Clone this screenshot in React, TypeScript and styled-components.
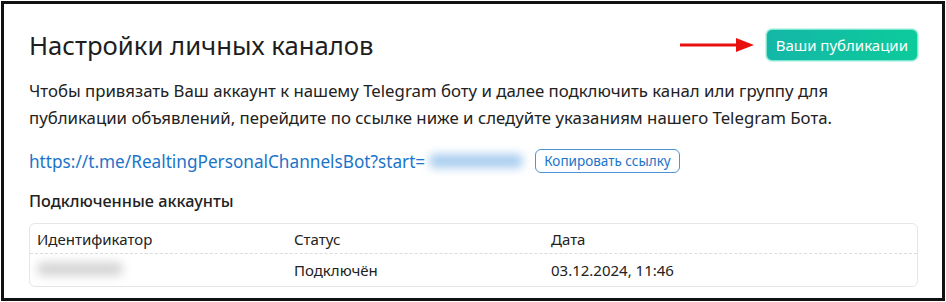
import React from "react";
import styled, { createGlobalStyle } from "styled-components";

const GlobalStyle = createGlobalStyle`
  html, body {
    margin: 0;
    padding: 0;
    background: #fff;
  }
  body {
    font-family: "Noto Sans", "Open Sans", sans-serif;
    color: #212529;
  }
`;

const Frame = styled.div`
  box-sizing: border-box;
  width: 944px;
  height: 300px;
  margin: 1px 0 0 1px;
  border: 3px solid #111;
  padding: 25px 24px 0 25px;
  display: flex;
  flex-direction: column;
`;

const HeaderRow = styled.div`
  display: flex;
  align-items: center;
  justify-content: space-between;
  height: 32px;
`;

const Title = styled.h1`
  margin: 0;
  font-size: 25.7px;
  font-weight: 400;
  color: #1e1e1e;
`;

const RightSide = styled.div`
  display: flex;
  align-items: center;
  gap: 12px;
`;

const PrimaryButton = styled.button`
  height: 32px;
  padding: 0 9px;
  border-radius: 6px;
  border: 1px solid #7fe6d2;
  box-shadow: 0 0 0 1px #c8f5ec;
  background: linear-gradient(90deg, #14b7a7, #0ccb9b);
  color: #fff;
  font-family: inherit;
  font-size: 15px;
`;

const Text = styled.p`
  margin: 16px 0 0;
  font-size: 16.8px;
  line-height: 27px;
  color: #222;
`;

const LinkRow = styled.div`
  display: flex;
  align-items: center;
  height: 24px;
  margin-top: 18px;
`;

const BotLink = styled.a`
  color: #1a74c9;
  font-size: 17.2px;
  text-decoration: none;
`;

const Blur = styled.span<{ $w: number; $color: string }>`
  display: inline-block;
  width: ${(p) => p.$w}px;
  height: 14px;
  background: ${(p) => p.$color};
  filter: blur(5px);
  border-radius: 6px;
`;

const BlurSlot = styled.span`
  display: inline-flex;
  align-items: center;
  margin: 0 12px 0 4px;
`;

const OutlineButton = styled.button`
  height: 24px;
  padding: 0 8px;
  border: 1px solid #4a95d8;
  border-radius: 6px;
  background: #fff;
  color: #1a74c9;
  font-family: inherit;
  font-size: 13.5px;
`;

const Subtitle = styled.h2`
  margin: 17px 0 0;
  font-size: 16.3px;
  line-height: 22px;
  font-weight: 500;
  color: #222;
`;

const Table = styled.div`
  margin-top: 11px;
  border: 1px solid #e6e6e6;
  border-radius: 6px;
`;

const Row = styled.div<{ $head?: boolean }>`
  display: grid;
  grid-template-columns: 257px 257px 1fr;
  align-items: center;
  height: ${(p) => (p.$head ? 29 : 32)}px;
  padding-left: 7px;
  border-top: ${(p) => (p.$head ? "none" : "1px dashed #dcdcdc")};
  font-size: 15px;
  color: #222;
`;

const Arrow = () => (
  <svg width="74" height="14" viewBox="0 0 74 14">
    <line x1="0" y1="7" x2="58" y2="7" stroke="#e8110f" strokeWidth="3" />
    <polygon points="56,0 74,7 56,14" fill="#e8110f" />
  </svg>
);

export default function App() {
  return (
    <>
      <GlobalStyle />
      <Frame>
        <HeaderRow>
          <Title>Настройки личных каналов</Title>
          <RightSide>
            <Arrow />
            <PrimaryButton>Ваши публикации</PrimaryButton>
          </RightSide>
        </HeaderRow>
        <Text>
          Чтобы привязать Ваш аккаунт к нашему Telegram боту и далее подключить канал или группу для
          <br />
          публикации объявлений, перейдите по ссылке ниже и следуйте указаниям нашего Telegram Бота.
        </Text>
        <LinkRow>
          <BotLink href="#">https://t.me/RealtingPersonalChannelsBot?start=</BotLink>
          <BlurSlot>
            <Blur $w={94} $color="#a9cdef" />
          </BlurSlot>
          <OutlineButton>Копировать ссылку</OutlineButton>
        </LinkRow>
        <Subtitle>Подключенные аккаунты</Subtitle>
        <Table>
          <Row $head>
            <span>Идентификатор</span>
            <span>Статус</span>
            <span>Дата</span>
          </Row>
          <Row>
            <span>
              <Blur $w={86} $color="#d6d6d6" />
            </span>
            <span>Подключён</span>
            <span>03.12.2024, 11:46</span>
          </Row>
        </Table>
      </Frame>
    </>
  );
}
